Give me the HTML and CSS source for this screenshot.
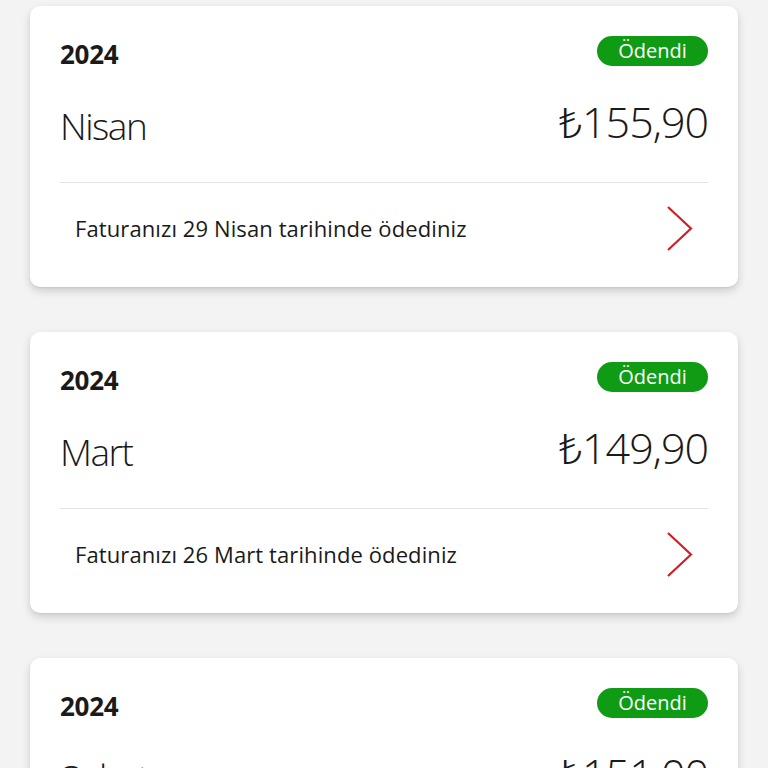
FILE: index.html
```html
<!DOCTYPE html>
<html lang="tr">
<head>
<meta charset="utf-8">
<link rel="stylesheet" href="styles.css">
</head>
<body>
<div class="list">
  <div class="card">
    <div class="head">
      <span class="year">2024</span>
      <span class="badge">Ödendi</span>
    </div>
    <div class="main">
      <span class="month">Nisan</span>
      <span class="price">₺155,90</span>
    </div>
    <div class="foot">
      <span class="note">Faturanızı 29 Nisan tarihinde ödediniz</span>
      <svg class="chev" width="28" height="47" viewBox="0 0 28 47"><path d="M2 2 L25 23.5 L2 45" fill="none" stroke="#cf1f28" stroke-width="2.2"/></svg>
    </div>
  </div>
  <div class="card">
    <div class="head">
      <span class="year">2024</span>
      <span class="badge">Ödendi</span>
    </div>
    <div class="main">
      <span class="month">Mart</span>
      <span class="price">₺149,90</span>
    </div>
    <div class="foot">
      <span class="note">Faturanızı 26 Mart tarihinde ödediniz</span>
      <svg class="chev" width="28" height="47" viewBox="0 0 28 47"><path d="M2 2 L25 23.5 L2 45" fill="none" stroke="#cf1f28" stroke-width="2.2"/></svg>
    </div>
  </div>
  <div class="card">
    <div class="head">
      <span class="year">2024</span>
      <span class="badge">Ödendi</span>
    </div>
    <div class="main">
      <span class="month">Şubat</span>
      <span class="price">₺151,00</span>
    </div>
    <div class="foot">
      <span class="note">Faturanızı 27 Şubat tarihinde ödediniz</span>
      <svg class="chev" width="28" height="47" viewBox="0 0 28 47"><path d="M2 2 L25 23.5 L2 45" fill="none" stroke="#cf1f28" stroke-width="2.2"/></svg>
    </div>
  </div>
</div>
</body>
</html>
```
FILE: styles.css
```css
html, body {
  margin: 0;
  padding: 0;
  background: #f3f3f3;
  font-family: "Open Sans", "Noto Sans", sans-serif;
  color: #1a1a1a;
  overflow: hidden;
}
.list {
  display: flex;
  flex-direction: column;
  gap: 45px;
  padding: 6px 30px 40px;
}
.card {
  background: #fff;
  border-radius: 10px;
  box-shadow: 0 4px 8px rgba(0,0,0,0.16), 0 1px 2px rgba(0,0,0,0.06);
  padding: 30px 30px 14px;
}
.head {
  display: flex;
  justify-content: space-between;
  align-items: center;
  height: 30px;
}
.year {
  font-size: 26px;
  font-weight: 700;
  margin-top: 6px;
  letter-spacing: -0.3px;
}
.badge {
  background: #0f9b14;
  color: #fff;
  border-radius: 15px;
  width: 111px;
  height: 30px;
  line-height: 30px;
  text-align: center;
  font-size: 20px;
}
.main {
  display: flex;
  justify-content: space-between;
  align-items: flex-start;
  height: 117px;
  box-sizing: border-box;
  border-bottom: 1px solid #e3e3e3;
  padding-top: 31px;
}
.month {
  font-size: 37px;
  font-weight: 300;
  line-height: 50px;
  letter-spacing: -1.5px;
  margin-top: 4px;
}
.price {
  font-size: 43px;
  font-weight: 300;
  line-height: 50px;
  letter-spacing: -1px;
}
.foot {
  display: flex;
  justify-content: space-between;
  align-items: center;
  height: 90px;
  padding: 0 14px 0 15px;
}
.note {
  font-size: 22px;
  letter-spacing: 0.1px;
}
.chev {
  display: block;
}
```
